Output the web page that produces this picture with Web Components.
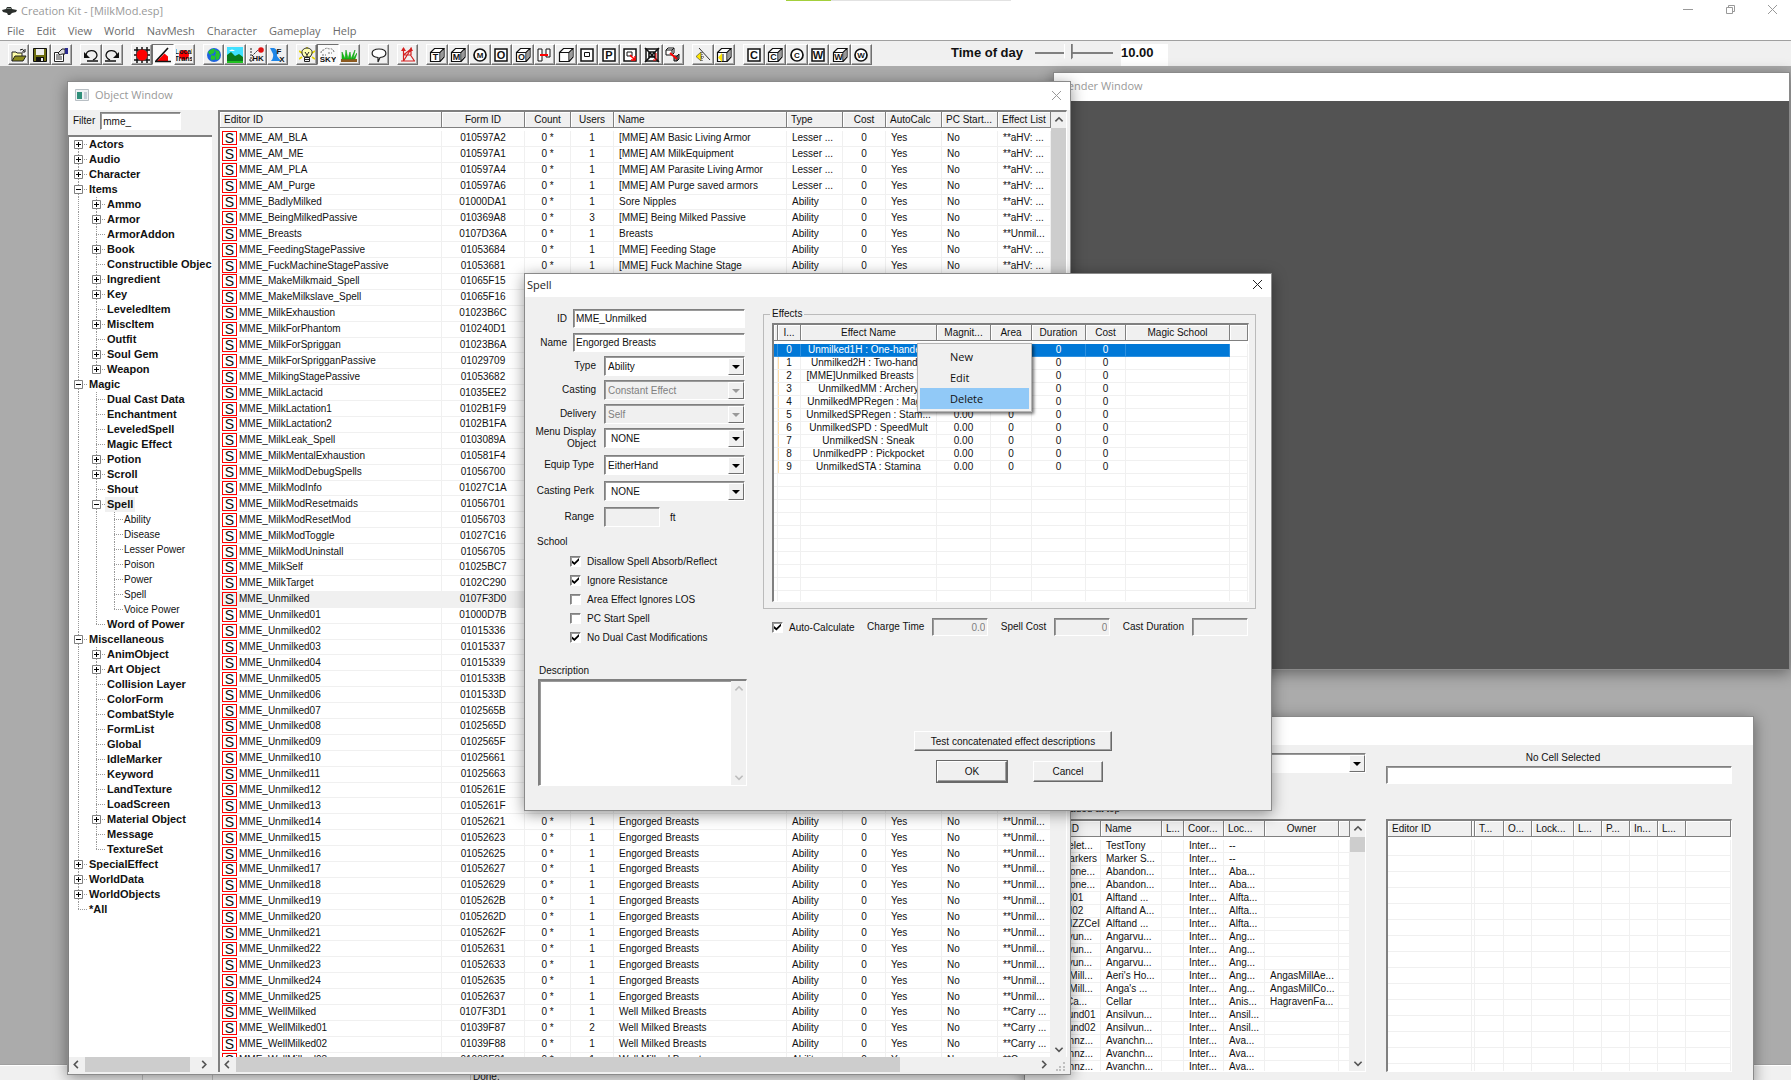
<!DOCTYPE html>
<html lang="en">
<head>
<meta charset="utf-8">
<title>Creation Kit - [MilkMod.esp]</title>
<style>
html, body { margin: 0; height: 100%; overflow: hidden; }
body {
  --face: #f0f0f0; --dark: #808080; --ui: "Open Sans", "Noto Sans", sans-serif;
  font: 10px/13px "Liberation Sans", Arial, sans-serif; color: #111;
}
</style>
</head>
<body>
<ck-app></ck-app>
<script>
class Base extends HTMLElement {
  paint(css, html) {
    if (!this.shadowRoot) this.attachShadow({ mode: 'open' });
    this.shadowRoot.innerHTML = `<style>*{box-sizing:border-box}${css}</style>${html}`;
  }
  $(q) { return this.shadowRoot.querySelector(q); }
}
const SUNK = 'border:1px solid;border-color:#808080 #fff #fff #808080;box-shadow:inset 1px 1px 0 #9a9a9a;';

/* ---------- toolbar icons ---------- */
const cube = (t = '', extra = '') => `<path d="M1.500 5.500h9.500v9h-9.500z M1.500 5.500l4-4h9.500l-4 4 M15 1.500v8.500l-4 4.500" fill="#fff" stroke="#111" stroke-width="1.200"/><path d="M11.500 6l3-3v6.500l-3 3.500z" fill="#999"/>${extra}${t ? `<text x="6.500" y="13" font-size="9">${t}</text>` : ''}`;
const box = t => `<rect x="2" y="2" width="12" height="12" fill="#fff" stroke="#111" stroke-width="1.500"/><text x="8" y="12" font-size="11">${t}</text>`;
const disc = t => `<circle cx="8" cy="8" r="6" fill="#fff" stroke="#111" stroke-width="1.700"/><text x="8" y="11" font-size="8">${t}</text>`;
const ICONS = {
  open: '<path d="M1 14V5h4l1 1h5v3" fill="#ffffa8" stroke="#222"/><path d="M1 14l3-5h11l-3 5z" fill="#8c8c1c" stroke="#222"/><path d="M9 3q3-2 4 1m1-2v3h-3" fill="none" stroke="#111"/>',
  save: '<path d="M1.500 1.500h13v13h-13z" fill="#6d6d10" stroke="#111"/><path d="M4 2h8v6H4z" fill="#eee"/><path d="M4 10h8v4H4z" fill="#111"/><path d="M9 11h2v3H9z" fill="#eee"/>',
  props: '<path d="M1.500 5.500h9v9h-9z" fill="#fff" stroke="#222"/><path d="M3 8h4M3 10h6M3 12h6" stroke="#333"/><path d="M5 6l4-4h3v5H9l-2 1z" fill="#ddd" stroke="#222"/><path d="M12 1h3v6h-3z" fill="#2a2a90"/>',
  undo: '<path d="M3 9c0-7 10-7 11-1 0 3-2 4-4 5" fill="none" stroke="#111" stroke-width="1.300"/><path d="M1 5v6h6z" fill="#111"/><path d="M4 14h11" stroke="#111" stroke-width="1.500"/>',
  redo: '<path d="M13 9c0-7-10-7-11-1 0 3 2 4 4 5" fill="none" stroke="#111" stroke-width="1.300"/><path d="M15 5v6H9z" fill="#111"/><path d="M1 14h11" stroke="#111" stroke-width="1.500"/>',
  grid: '<path d="M3 0v16M8 0v16M13 0v16M0 3h16M0 8h16M0 13h16" stroke="#111" stroke-width="1.500"/><circle cx="8" cy="8" r="5.500" fill="red"/>',
  angle: '<path d="M2 14L9.500 6.500l3.500 3V14z" fill="red"/><path d="M0 14.500h16M1 14L13 1" stroke="#111" stroke-width="1.700"/>',
  local: '<circle cx="8" cy="8" r="5" fill="red"/><text x="8" y="7" font-size="7">Local</text><text x="8" y="14" font-size="7">Trans</text>',
  globe: '<circle cx="8" cy="8" r="7" fill="#1d62e0"/><path d="M2 5q4-4 7-3l-1 4-4 2zM9 7l5 0-1 5-3 1zM4 10l3 1-1 3z" fill="#27c52b"/><path d="M9 3l4 1 1 4-4-1zM5 8l4 1v4l-4-1z" fill="#27c52b"/>',
  land: '<path d="M0 0h16v16H0z" fill="#3fe0ff"/><path d="M0 8l4-3 4 4 4-2 4 3v6H0z" fill="#0a7a1c"/><path d="M2 4q3-3 6 0z" fill="#fff"/><path d="M0 14h16v2H0z" fill="#20c020"/>',
  hk: '<path d="M3 1v14M1 13h4M4 9l6-6" stroke="#222" stroke-dasharray="2 1"/><circle cx="13" cy="3" r="2.800" fill="#e01010"/><text x="10" y="14" font-size="8">HK</text>',
  fx: '<path d="M1 1h4q4 1 3 8l4 5H2q4-5 1-9z" fill="#1f86e8"/><text x="10" y="7" font-size="8">F</text><text x="13" y="15" font-size="8">X</text>',
  bulb: '<path d="M0 4l3 2M16 4l-3 2M0 12l3-2M16 12l-3-2M8 0v2" stroke="#e8d800" stroke-width="1.600"/><path d="M5 10C0 4 5 1 8 1s8 3 3 9z" fill="#ffffb0" stroke="#222"/><path d="M6 5l2 3 2-3M8 8v2M5.500 10.500h5v4h-5zM6 12.500h4" fill="none" stroke="#222"/>',
  sky: '<path d="M1 6q0-3 3-3 2-3 5-1 4-1 5 3M2 8h4m2-2h4" fill="none" stroke="#777" stroke-dasharray="2 1"/><text x="8" y="15" font-size="8">SKY</text>',
  grass: '<path d="M0 12h16v3H0z" fill="#8c5a20"/><path d="M1 12V5l3 7 1-9 2 9 2-7 1 7 4-9-2 9 4-6-2 6z" fill="#10c010" stroke="#10a010" stroke-width=".6"/>',
  talk: '<path d="M8 2c9 0 9 8 1 8.500L7 15v-4.500C-1 10-1 2 8 2z" fill="#fff" stroke="#222" stroke-width="1.200"/>',
  nav: '<path d="M3.500 1v13M1 14h14M3.500 14L11 2v6M3.500 8L11 2M3.500 8l7 0 4 6" fill="none" stroke="#d42020" stroke-width="1.200"/><path d="M3.500 0l-2.500 4h5zM11 0l-2 4h4z" fill="#d42020"/>',
  cT: cube('T'), cM: cube('M'), dM: disc('M'), bO: box('O'), cO: cube('O'),
  link: '<path d="M2 2h4v12H2zM10 2h4v8h-4z" fill="#fff" stroke="#111"/><path d="M4 8h8" stroke="red" stroke-width="2"/>',
  c0: cube(), inner: '<rect x="2" y="2" width="12" height="12" fill="#fff" stroke="#111" stroke-width="1.500"/><path d="M5.500 5.500h5v4h-5z" fill="none" stroke="#111"/>',
  bP: box('P'),
  arrow: '<rect x="2" y="2" width="12" height="12" fill="#fff" stroke="#111" stroke-width="1.500"/><path d="M5 5h5v4H5z" fill="none" stroke="#111"/><path d="M8 8l5 5M13 9v4H9" stroke="red" stroke-width="1.500" fill="none"/>',
  cross: '<rect x="2" y="2" width="12" height="12" fill="#fff" stroke="#111" stroke-width="1.500"/><path d="M5 5h6v5H5zM1 1l14 14M15 1L1 15" fill="none" stroke="#111" stroke-width="1.600"/><path d="M12 6v7H9" fill="none" stroke="red"/>',
  chain: '<path d="M1 3h6v5H1zM1 3l2-2h6L7 3M9 1v5L7 8" fill="#fff" stroke="#111"/><path d="M9 9h3v5H9zM12 9l2-2v5l-2 2" fill="#888" stroke="#111"/><path d="M5 6l7 6" stroke="red" stroke-width="1.800"/>',
  lite: '<path d="M4 1l11 12" stroke="#333"/><path d="M6 5v9l-5-4.500z" fill="#ffe600" stroke="#333" stroke-width=".6"/><path d="M7 5v10M6 10h4" stroke="#333" stroke-dasharray="1 1"/>',
  cL: cube('', '<path d="M6 6l-4 4.500 4 4.500z" fill="#ffe600"/><path d="M7 7v7" stroke="#222"/>'),
  bC: box('C'), cC: cube('C'), dC: disc('C'), bW: box('W'), cW: cube('W'), dW: disc('W')
};
customElements.define('ck-icon', class extends Base {
  connectedCallback() {
    this.paint(`:host{display:block;width:16px;height:16px}svg{display:block;width:100%;height:100%}
      text{font-family:"Liberation Sans";font-weight:bold;text-anchor:middle;fill:#111}`,
      `<svg viewBox="0 0 16 16" aria-hidden="true">${ICONS[this.getAttribute('name')]}</svg>`);
  }
});

customElements.define('ck-toolbar', class extends Base {
  connectedCallback() {
    const groups = [['open','save','props'],['undo','redo'],['grid','angle!','local'],['globe','land','hk','fx'],['bulb','sky!','grass'],['talk'],['nav'],
      ['cT','cM','dM','bO','cO','link','c0','inner','bP','arrow','cross','chain'],['lite','cL'],['bC','cC','dC','bW','cW','dW']];
    const widths = {1:21,2:43,3:64,4:85,6:129,12:258};
    this.paint(`:host{display:flex;align-items:flex-start;height:26px;padding:3px 0 0 8px;background:var(--face);border-top:1px solid #a0a0a0;gap:8px}
      .g{display:flex;height:21px;flex:none}
      button{flex:1;min-width:0;padding:0;display:grid;place-items:center;background:var(--face);border:1px solid;border-color:#fff #707070 #707070 #fff;box-shadow:inset -1px -1px 0 #a8a8a8}
      button.on{background:#fafafa;border-color:#707070 #fff #fff #707070;box-shadow:none}
      .time{display:flex;align-items:flex-start;margin-left:71px;font:bold 13px/17px "Liberation Sans",sans-serif}
      input{appearance:none;width:78px;height:18px;margin:0 8px 0 12px;background:linear-gradient(#808080,#808080) 0 8px/100% 2px no-repeat}
      input::-webkit-slider-thumb{appearance:none;width:9px;height:19px;background:linear-gradient(90deg,#fff 1px,#f0f0f0 1px 7px,#777 7px);clip-path:polygon(0 0,100% 0,100% 75%,50% 100%,0 75%)}
      output{width:47px;height:22px;background:#fff}`,
      groups.map(g => `<div class="g" style="width:${widths[g.length]}px">` + g.map(n => {
        const on = n.endsWith('!'), id = n.replace('!', '');
        return `<button type="button" aria-label="${id}" class="${on ? 'on' : ''}"><ck-icon name="${id}"></ck-icon></button>`;
      }).join('') + '</div>').join('') +
      `<div class="time"><label for="t">Time of day</label><input id="t" type="range" min="0" max="24" value="10"><output for="t">10.00</output></div>`);
  }
});

customElements.define('ck-titlebar', class extends Base {
  connectedCallback() {
    this.paint(`:host{display:block;height:40px;background:#fff;font:11px/16px var(--ui)}
      .t{display:flex;height:22px;align-items:center;color:#999;padding-left:2px;gap:4px}
      .t svg{display:block}.t .s{flex:1}
      .w{border:0;background:none;padding:0;width:38px;height:18px;display:grid;place-items:center;align-self:flex-start}
      nav{display:flex;gap:12px;padding:1px 7px}nav a{color:#6b6b6b;text-decoration:none}
      .load{position:absolute;left:786px;top:0;width:225px;height:1px;background:linear-gradient(90deg,#a3cf3b 45px,#e2e2e2 45px)}`,
      `<div class="t"><svg width="15" height="10" viewBox="0 0 15 10"><path d="M0 4l4-1 1-2h4l1 2 5 1-1 2-4 1-2 2H6L5 7 1 6z" fill="#2b2f2c"/><path d="M5 2h4v1H5z" fill="#7c8a84"/></svg>
      <span class="s">Creation Kit - [MilkMod.esp]</span>
      <button class="w" aria-label="Minimize"><svg width="10" height="10"><path d="M0 5.500h10" stroke="#999"/></svg></button>
      <button class="w" aria-label="Restore"><svg width="11" height="11"><path d="M1.500 3.500h6v6h-6zM3.500 3V1.500h6v6H8" fill="none" stroke="#999"/></svg></button>
      <button class="w" aria-label="Close"><svg width="11" height="11"><path d="M1 1l9 9M10 1l-9 9" stroke="#999"/></svg></button></div>
      <nav>${['File','Edit','View','World','NavMesh','Character','Gameplay','Help'].map(x => `<a href="#">${x}</a>`).join('')}</nav><div class="load"></div>`);
  }
});

/* ---------- window frame ---------- */
customElements.define('ck-window', class extends Base {
  connectedCallback() {
    const t = this.getAttribute('title-text') || '', icon = this.hasAttribute('icon');
    this.paint(`:host{display:flex;flex-direction:column;background:var(--face);border:1px solid #8a8a8a;box-shadow:0 3px 14px rgba(0,0,0,.42)}
      header{display:flex;align-items:center;height:var(--title-h,28px);background:#fff;flex:none;font:11px/16px var(--ui);color:var(--title-c,#999);padding:0 8px 2px var(--title-pad,7px);gap:6px}
      h2{font:inherit;margin:0;flex:1}
      button{border:0;background:none;padding:0;display:grid;color:inherit}
      main{flex:1;min-height:0;display:flex;flex-direction:column}`,
      `<header>${icon ? '<svg width="14" height="12"><path d="M.5.5h13v11H.5z" fill="#eef2f4" stroke="#b8bfc4"/><path d="M2 3h5v7H2z" fill="#2f8f7a"/><path d="M9 3h3v7H9z" fill="#c4cdd6"/></svg>' : ''}
      <h2>${t}</h2>${this.hasAttribute('closable') ? '<button aria-label="Close"><svg width="11" height="11"><path d="M1 1l9 9M10 1l-9 9" stroke="currentColor"/></svg></button>' : ''}</header><main><slot></slot></main>`);
  }
});

customElements.define('ck-scroll', class extends Base {
  connectedCallback() {
    const v = this.getAttribute('dir') !== 'h', off = this.hasAttribute('off'), c = off ? '#bdbdbd' : '#555';
    const a = v ? ['M1 6l4-4 4 4', 'M1 3l4 4 4-4'] : ['M6 1L2 5l4 4', 'M3 1l4 4-4 4'];
    const b = d => `<button type="button" aria-label="Scroll"><svg width="10" height="9" viewBox="0 0 10 10"><path d="${d}" fill="none" stroke="${c}" stroke-width="1.800"/></svg></button>`;
    this.paint(`:host{display:flex;flex-direction:${v ? 'column' : 'row'};background:var(--face);flex:none;${v ? 'width:15px' : 'height:15px'}}
      button{border:0;padding:0;background:none;${v ? 'height:16px' : 'width:16px'};display:grid;place-items:center;flex:none}
      .k{flex:1;display:flex;flex-direction:inherit}.k i{background:#cdcdcd;flex:0 0 ${this.getAttribute('size') || 0}%}`,
      b(a[0]) + '<div class="k"><i></i></div>' + b(a[1]));
  }
});

/* ---------- report list ---------- */
customElements.define('ck-list', class extends Base {
  set config(c) {
    const cell = (v, i) => `<td class="${c.cols[i].a || ''}${c.cols[i].k ? ' ' + c.cols[i].k : ''}">${c.cols[i].s ? `<span class="i"><b>S</b>${v}</span>` : v}</td>`;
    const gap = c.gap || 3;
    this.paint(`:host{display:flex;min-height:0;background:#fff;border:1px solid;border-width:2px 1px 1px 2px;border-color:#808080 #fff #fff #808080}
      .v{flex:1;overflow:hidden;min-width:0}
      table{table-layout:fixed;border-collapse:separate;border-spacing:0;width:100%;${c.fill ? `height:calc(100% + ${c.fill}px)` : ''}}
      th{padding:0 0 ${gap}px;font-weight:normal;height:${16 + gap}px;text-align:left}
      th span{display:block;height:16px;line-height:15px;background:var(--face);border-right:1px solid #808080;border-bottom:1px solid #808080;box-shadow:inset 1px 1px 0 #fff;padding:0 4px;overflow:hidden;white-space:nowrap}
      td{padding:0 0 0 5px;height:${c.rh}px;line-height:${c.rh - 1}px;border-right:1px solid #f0f0f0;border-bottom:1px solid #f0f0f0;white-space:nowrap;overflow:hidden}
      .c{text-align:center}td.c{padding:0}th.c span{padding:0}
      .i{display:flex;align-items:center;gap:2px;margin-left:-3px}
      .i b{flex:none;width:15px;height:14px;border:1px solid red;font:14px/12px "Liberation Sans",sans-serif;text-align:center}
      tr.hot td{background:var(--face)}
      tr.sel td:not(:last-child){background:#0078d7;color:#fff;border-color:#2f91e0}
      td.mark{box-shadow:inset 1px 0 0 #ffdca4}tr.sel td.mark,tr.blank td.mark{box-shadow:none}`,
      `<div class="v"><table><colgroup>${c.cols.map(x => `<col${x.w ? ` style="width:${x.w}px"` : ''}>`).join('')}</colgroup><thead><tr>${c.cols.map(x => `<th class="${x.ha || x.a || ''}"><span>${x.t}</span></th>`).join('')}</tr></thead><tbody>${c.rows.map((r, i) => `<tr class="${i === c.hot ? 'hot' : ''}${i === c.sel ? 'sel' : ''}">${r.map(cell).join('')}</tr>`).join('')}${`<tr class="blank">${c.cols.map(x => `<td class="${x.k || ''}"></td>`).join('')}</tr>`.repeat(c.blank || 0)}</tbody></table></div><slot></slot>`);
  }
});

/* ---------- tree ---------- */
customElements.define('ck-tree', class extends Base {
  connectedCallback() {
    const T = `0+Actors,0+Audio,0+Character,0-Items,1+Ammo,1+Armor,1 ArmorAddon,1+Book,1 Constructible Objec,1+Ingredient,1+Key,1 LeveledItem,1+MiscItem,1 Outfit,1+Soul Gem,1+Weapon,0-Magic,1 Dual Cast Data,1 Enchantment,1 LeveledSpell,1 Magic Effect,1+Potion,1+Scroll,1 Shout,1-Spell,2 Ability,2 Disease,2 Lesser Power,2 Poison,2 Power,2 Spell,2 Voice Power,1 Word of Power,0-Miscellaneous,1+AnimObject,1+Art Object,1 Collision Layer,1 ColorForm,1 CombatStyle,1 FormList,1 Global,1 IdleMarker,1 Keyword,1 LandTexture,1 LoadScreen,1+Material Object,1 Message,1 TextureSet,0+SpecialEffect,0+WorldData,0+WorldObjects,0 *All`
      .split(',').map(s => ({ d: +s[0], m: s[1].trim(), t: s.slice(2) }));
    const more = (i, l) => { for (let j = i + 1; j < T.length; j++) { if (T[j].d < l) return false; if (T[j].d === l) return true; } return false; };
    this.paint(`:host{display:flex;flex-direction:column;background:#fff;border:1px solid;border-width:2px 0 0 1px;border-color:#808080}
      .l{flex:1;min-height:0;overflow:hidden}
      .r{display:flex;height:15px;align-items:stretch;white-space:nowrap}
      svg{width:18px;height:15px;flex:none;display:block}
      .n{font:bold 11px/15px "Liberation Sans",sans-serif;padding:0 2px}.n.d2{font:10px/15px "Liberation Sans",sans-serif;padding:0 1px}.n.on{background:var(--face)}
      .g{stroke:#999;stroke-dasharray:1 1}`,
      `<div class="l" role="tree">${T.map((n, i) => {
        let h = '';
        for (let l = 0; l < n.d; l++) h += `<svg>${more(i, l) ? '<path class="g" d="M9.500 0v15"/>' : ''}</svg>`;
        h += `<svg><path class="g" d="M9.500 ${i ? 0 : 8}V${more(i, n.d) ? 15 : 8}M9 7.500h9"/>${n.m ? `<path d="M5.500 3.500h8v8h-8z" fill="#fff" stroke="#808080"/><path d="M7 7.500h5${n.m === '+' ? 'M9.500 5v5' : ''}" stroke="#000"/>` : ''}</svg>`;
        return `<div class="r" role="treeitem">${h}<span class="n d${n.d}${i === 24 ? ' on' : ''}">${n.t}</span></div>`;
      }).join('')}</div><ck-scroll dir="h" size="95"></ck-scroll>`);
  }
});

/* ---------- form parts ---------- */
customElements.define('ck-field', class extends Base {
  connectedCallback() {
    const g = n => this.getAttribute(n) || '', off = this.hasAttribute('off'), d = off ? 'disabled' : '';
    const ctl = g('kind') === 'select'
      ? `<div class="b"><select id="c" ${d}><option>${g('value')}</option></select><span class="a"><svg width="8" height="4"><path d="M0 0h8L4 4z" fill="${off ? '#999' : '#000'}"/></svg></span></div>`
      : `<div class="b"><input id="c" type="text" value="${g('value')}" ${d}></div>`;
    this.paint(`:host{display:flex;align-items:center;gap:var(--gap,8px);height:var(--h,20px)}
      label{width:var(--lw,auto);text-align:right;flex:none;line-height:12px}
      .b{width:var(--cw,auto);flex:var(--cf,none);height:100%;display:flex;position:relative;background:${off ? 'var(--face)' : '#fff'};${SUNK}}
      input,select{appearance:none;border:0;outline:0;background:none;width:100%;min-width:0;height:100%;padding:0 2px;margin:0;font:inherit;color:${off ? '#808080' : '#111'};text-align:${g('align') || 'left'};opacity:1}
      select{padding-left:${g('pad') || 3}px}
      .a{position:absolute;pointer-events:none;right:0;top:1px;bottom:0;width:16px;display:grid;place-items:center;background:var(--face);border:1px solid;border-color:#fff #707070 #707070 #fff}
      .a svg{display:block}`,
      `<label for="c">${g('label')}</label>${ctl}${g('unit') ? `<span>${g('unit')}</span>` : ''}`);
  }
});
customElements.define('ck-check', class extends Base {
  connectedCallback() {
    this.paint(`:host{display:block;height:13px}label{display:flex;align-items:center;gap:6px;height:100%;white-space:nowrap}
      input{appearance:none;margin:0;width:11px;height:11px;background:#fff;flex:none;${SUNK}display:grid;place-items:center}
      input:checked::before{content:"";width:7px;height:7px;background:#000;clip-path:polygon(0 35%,35% 65%,100% 0,100% 35%,35% 100%,0 70%)}`,
      `<label><input type="checkbox" ${this.hasAttribute('on') ? 'checked' : ''}>${this.textContent}</label>`);
  }
});
customElements.define('ck-button', class extends Base {
  connectedCallback() {
    this.paint(`:host{display:block}button{width:100%;height:100%;padding:0;font:inherit;color:inherit;background:var(--face);border:1px solid;border-color:#fff #696969 #696969 #fff;box-shadow:inset -1px -1px 0 #a0a0a0${this.hasAttribute('main') ? ',0 0 0 1px #696969' : ''}}`,
      '<button type="button"><slot></slot></button>');
  }
});
customElements.define('ck-menu', class extends Base {
  connectedCallback() {
    this.paint(`:host{display:block;background:var(--face);border:1px solid #b4b4b4;box-shadow:2px 2px 3px rgba(0,0,0,.55);padding:2px;font:11px/21px var(--ui)}
      button{display:block;width:100%;border:0;background:none;font:inherit;color:#111;text-align:left;padding:0 0 0 30px;height:21px}.hot{background:#91c9f7}`,
      '<button>New</button><button>Edit</button><button class="hot">Delete</button>');
  }
});

/* ---------- windows ---------- */
customElements.define('object-window', class extends Base {
  connectedCallback() {
    this.paint(`:host{display:block}ck-window{height:100%}
      .body{display:flex;flex:1;min-height:0;gap:6px;padding:0 3px 2px 0}
      .left{width:144px;display:flex;flex-direction:column}
      ck-field{--h:18px;--gap:5px;--cw:81px;padding:2px 0 0 5px;height:20px;margin-bottom:5px}
      ck-tree{flex:1;min-height:0}
      .right{flex:1;min-width:0;display:flex;flex-direction:column}
      ck-list{flex:1;border-bottom:0}
      .b{display:flex;border-left:2px solid #808080;background:var(--face)}.b ck-scroll{flex:1}
      .b svg{width:15px;height:15px}`,
      `<ck-window title-text="Object Window" icon closable><div class="body"><div class="left"><ck-field label="Filter" value="mme_"></ck-field><ck-tree></ck-tree></div>
      <div class="right"><ck-list><ck-scroll size="55"></ck-scroll></ck-list><div class="b"><ck-scroll dir="h" size="83"></ck-scroll><svg><path d="M11 5h2v2h-2zM11 9h2v2h-2zM11 12h2v2h-2zM7 9h2v2H7zM7 12h2v2H7zM4 12h2v2H4z" fill="#c0c0c0"/></svg></div></div></div></ck-window>`);
    const E = 'Engorged Breasts', A = 'Ability', W = 'Well Milked Breasts';
    const raw = `AM_BLA 010597A2 [MME]_AM_Basic_Living_Armor L|AM_ME 010597A1 [MME]_AM_MilkEquipment L|AM_PLA 010597A4 [MME]_AM_Parasite_Living_Armor L|AM_Purge 010597A6 [MME]_AM_Purge_saved_armors L|BadlyMilked 01000DA1 Sore_Nipples|BeingMilkedPassive 010369A8 [MME]_Being_Milked_Passive|Breasts 0107D36A Breasts|FeedingStagePassive 01053684 [MME]_Feeding_Stage|FuckMachineStagePassive 01053681 [MME]_Fuck_Machine_Stage|MakeMilkmaid_Spell 01065F15|MakeMilkslave_Spell 01065F16|MilkExhaustion 01023B6C|MilkForPhantom 010240D1|MilkForSpriggan 01023B6A|MilkForSprigganPassive 01029709|MilkingStagePassive 01053682|MilkLactacid 01035EE2|MilkLactation1 0102B1F9|MilkLactation2 0102B1FA|MilkLeak_Spell 0103089A|MilkMentalExhaustion 010581F4|MilkModDebugSpells 01056700|MilkModInfo 01027C1A|MilkModResetmaids 01056701|MilkModResetMod 01056703|MilkModToggle 01027C16|MilkModUninstall 01056705|MilkSelf 01025BC7|MilkTarget 0102C290|Unmilked 0107F3D0`.split('|');
    '01000D7B 01015336 01015337 01015339 0101533B 0101533D 0102565B 0102565D 0102565F 01025661 01025663 0105261E 0105261F 01052621 01052623 01052625 01052627 01052629 0105262B 0105262D 0105262F 01052631 01052633 01052635 01052637'
      .split(' ').forEach((f, i) => raw.push(`Unmilked${String(i + 1).padStart(2, '0')} ${f}`));
    raw.push('WellMilked 0107F3D1 W', 'WellMilked01 01039F87 W', 'WellMilked02 01039F88 W', 'WellMilked03 01039F81 W');
    const rows = raw.map((s, i) => {
      const [id, f, n, l] = s.split(' ');
      return ['MME_' + id, f, '0 *', i === 5 ? '3' : i === 56 ? '2' : '1', !n ? E : n === 'W' ? W : n.replace(/_/g, ' '), l ? 'Lesser ...' : A, '0', 'Yes', 'No',
        n === 'W' ? '**Carry ...' : i < 9 && i !== 6 ? '**aHV: ...' : '**Unmil...'];
    });
    this.$('ck-list').config = { rh: 13, gap: 3, fill: 12, hot: 29, rows, cols: [
      { t: 'Editor ID', w: 222, s: 1 }, { t: 'Form ID', w: 83, a: 'c' }, { t: 'Count', w: 46, a: 'c' }, { t: 'Users', w: 43, a: 'c' }, { t: 'Name', w: 173 },
      { t: 'Type', w: 56 }, { t: 'Cost', w: 43, a: 'c' }, { t: 'AutoCalc', w: 56 }, { t: 'PC Start...', w: 56 }, { t: 'Effect List' }] };
  }
});

customElements.define('cell-window', class extends Base {
  connectedCallback() {
    this.paint(`:host{display:block}ck-window{height:100%}
      .body{display:flex;flex:1;min-height:0;gap:20px;padding:6px 21px 14px 9px}
      .l{width:332px;display:flex;flex-direction:column}.r{flex:1;display:flex;flex-direction:column}
      ck-field{--cf:1;--h:20px;margin-top:2px}
      .h{margin:0;text-align:center;padding-left:8px}
      .name{height:18px;width:100%;margin-top:2px;background:#fff;${SUNK}}
      .top{margin:29px 0 4px;padding-left:25px}
      ck-list{flex:1;min-height:0}.r ck-list{margin-top:35px}`,
      `<ck-window><div class="body"><div class="l"><ck-field label="World Space" kind="select" value=""></ck-field><p class="top">Loaded at top</p><ck-list id="a"><ck-scroll size="7"></ck-scroll></ck-list></div>
      <div class="r"><p class="h">No Cell Selected</p><input class="name" aria-label="Cell"><ck-list id="b"></ck-list></div></div></ck-window>`);
    const R = `AAADelet...|TestTony|--,AAAMarkers|Marker S...|--,Abandone...|Abandon...|Aba...,Abandone...|Abandon...|Aba...,Alftand01|Alftand ...|Alfta...,Alftand02|Alftand A...|Alfta...,AlftandZZCell|Alftand ...|Alfta...,Angarvun...|Angarvu...|Ang...,Angarvun...|Angarvu...|Ang...,Angarvun...|Angarvu...|Ang...,AngasMill...|Aeri's Ho...|Ang...|AngasMillAe...,AngasMill...|Anga's ...|Ang...|AngasMillCo...,AniseCa...|Cellar|Anis...|HagravenFa...,Ansilvund01|Ansilvun...|Ansil...,Ansilvund02|Ansilvun...|Ansil...,Avanchnz...|Avanchn...|Ava...,Avanchnz...|Avanchn...|Ava...,Avanchnz...|Avanchn...|Ava...`
      .split(',').map(s => { const [a, b, c, d = ''] = s.split('|'); return [a, b, '', 'Inter...', c, d, '']; });
    this.$('#a').config = { rh: 13, rows: R, cols: [{ t: 'Editor ID', w: 65 }, { t: 'Name', w: 61 }, { t: 'L...', w: 22 }, { t: 'Coor...', w: 40 }, { t: 'Loc...', w: 41 }, { t: 'Owner', w: 74, ha: 'c' }, { t: '' }] };
    this.$('#b').config = { rh: 16, rows: [], blank: 16, cols: [{ t: 'Editor ID', w: 84 }, { t: '', w: 3, a: 'c' }, { t: 'T...', w: 29 }, { t: 'O...', w: 28 }, { t: 'Lock...', w: 42 }, { t: 'L...', w: 28 }, { t: 'P...', w: 28 }, { t: 'In...', w: 28 }, { t: 'L...', w: 28 }, { t: '' }] };
  }
});

customElements.define('spell-window', class extends Base {
  connectedCallback() {
    this.paint(`:host{display:block}ck-window{height:100%;--title-h:23px;--title-c:#222;--title-pad:2px}
      .body{display:flex;flex:1;min-height:0;padding:12px 15px 20px 9px;gap:16px}
      .l{width:213px;display:flex;flex-direction:column}
      .g{display:flex;flex-direction:column}
      .a{gap:5px;--h:19px;--lw:33px;--gap:6px;--cw:172px}.b{gap:4px;margin-top:4px;--lw:62px;--cw:141px}.c{gap:6px;margin-top:7px;--lw:60px;--gap:10px;--cw:141px}
      .short{--cw:56px;--h:20px;--gap:10px}
      .s{margin:8px 0 0 3px}.k{gap:6px;margin:7px 0 0 36px}
      .d{margin:20px 0 2px 5px;display:block}
      .t{flex:1;max-height:107px;display:flex;margin:0 0 0 4px;${SUNK}border-width:2px 1px 1px 2px;background:#fff}
      textarea{flex:1;min-width:0;border:0;resize:none;outline:0;background:none;font:inherit}
      .r{flex:1;display:flex;flex-direction:column;min-width:0}
      fieldset{margin:0;padding:0 6px 5px 8px;border:1px solid #bbb;min-width:0;display:flex;flex-direction:column;height:300px}
      legend{padding:0 2px;margin:0 0 4px -2px;line-height:10px}
      ck-list{height:279px}
      .m{display:flex;justify-content:space-between;align-items:center;margin:9px 8px 0 9px;--cw:56px;--h:18px}
      .btns{display:flex;flex-direction:column;gap:10px;margin:95px 0 0 151px;width:198px}
      .btns ck-button{height:20px}.two{display:flex;justify-content:space-between;padding:0 9px 0 23px}.two ck-button{height:21px;width:70px}`,
      `<ck-window title-text="Spell" closable><div class="body"><div class="l">
      <div class="g a"><ck-field label="ID" value="MME_Unmilked"></ck-field><ck-field label="Name" value="Engorged Breasts"></ck-field></div>
      <div class="g b"><ck-field kind="select" label="Type" value="Ability"></ck-field><ck-field kind="select" label="Casting" value="Constant Effect" off></ck-field><ck-field kind="select" label="Delivery" value="Self" off></ck-field><ck-field kind="select" label="Menu Display Object" value="NONE" pad="6"></ck-field></div>
      <div class="g c"><ck-field kind="select" label="Equip Type" value="EitherHand"></ck-field><ck-field kind="select" label="Casting Perk" value="NONE" pad="6"></ck-field><ck-field class="short" label="Range" value="" unit="ft" off></ck-field></div>
      <div class="s">School</div>
      <div class="g k"><ck-check on>Disallow Spell Absorb/Reflect</ck-check><ck-check on>Ignore Resistance</ck-check><ck-check>Area Effect Ignores LOS</ck-check><ck-check>PC Start Spell</ck-check><ck-check on>No Dual Cast Modifications</ck-check></div>
      <label class="d" for="desc">Description</label><div class="t"><textarea id="desc"></textarea><ck-scroll off></ck-scroll></div></div>
      <div class="r"><fieldset><legend>Effects</legend><ck-list></ck-list></fieldset>
      <div class="m"><ck-check on>Auto-Calculate</ck-check><ck-field label="Charge Time" value="0.0" align="right" off></ck-field><ck-field label="Spell Cost" value="0" align="right" off></ck-field><ck-field label="Cast Duration" off></ck-field></div>
      <div class="btns"><ck-button>Test concatenated effect descriptions</ck-button><div class="two"><ck-button main>OK</ck-button><ck-button>Cancel</ck-button></div></div></div></div></ck-window>`);
    const rows = ['Unmilked1H : One-hande...', 'Unmilked2H : Two-hand...', '[MME]Unmilked Breasts : ...', 'UnmilkedMM : Archery', 'UnmilkedMPRegen : Mag...', 'UnmilkedSPRegen : Stam...', 'UnmilkedSPD : SpeedMult', 'UnmilkedSN : Sneak', 'UnmilkedPP : Pickpocket', 'UnmilkedSTA : Stamina']
      .map((n, i) => ['', i, n, '0.00', '0', '0', '0', '', '']);
    this.$('ck-list').config = { rh: 13, sel: 0, rows, blank: 10, cols: [{ t: '', w: 4, a: 'c' }, { t: 'I...', w: 23, a: 'c', k: 'mark' }, { t: 'Effect Name', w: 136, a: 'c' }, { t: 'Magnit...', w: 54, a: 'c' }, { t: 'Area', w: 41, a: 'c' }, { t: 'Duration', w: 54, a: 'c' }, { t: 'Cost', w: 40, a: 'c' }, { t: 'Magic School', w: 104, a: 'c' }, { t: '' }] };
  }
});

customElements.define('ck-app', class extends Base {
  connectedCallback() {
    this.paint(`:host{display:flex;flex-direction:column;height:100vh;position:relative;overflow:hidden;background:#ababab}
      .desk{flex:1}
      footer{height:15px;background:var(--face);border-top:1px solid #fff;box-shadow:0 -1px 0 #a0a0a0;display:flex;line-height:22px}
      footer span{border-right:1px solid #c4c4c4;width:70px}footer span:first-child{width:143px}footer span:nth-child(3){width:258px}footer span:last-child{padding-left:2px;flex:1;border:0}
      .win{position:absolute}
      .render{left:1053px;top:72px;width:737px;height:598px}
      .render div{flex:1;background:#535353}
      .cell{left:1024px;top:716px;width:730px;height:371px}
      .obj{left:67px;top:81px;width:1004px;height:994px}
      .spell{left:524px;top:273px;width:748px;height:538px}
      .menu{left:917px;top:343px;width:115px}`,
      `<ck-titlebar></ck-titlebar><ck-toolbar></ck-toolbar><div class="desk"></div>
      <footer><span></span><span></span><span></span><span>Done.</span></footer>
      <ck-window class="win render" title-text="Render Window"><div></div></ck-window>
      <cell-window class="win cell"></cell-window><object-window class="win obj"></object-window>
      <spell-window class="win spell"></spell-window><ck-menu class="win menu"></ck-menu>`);
  }
});
</script>
</body>
</html>
